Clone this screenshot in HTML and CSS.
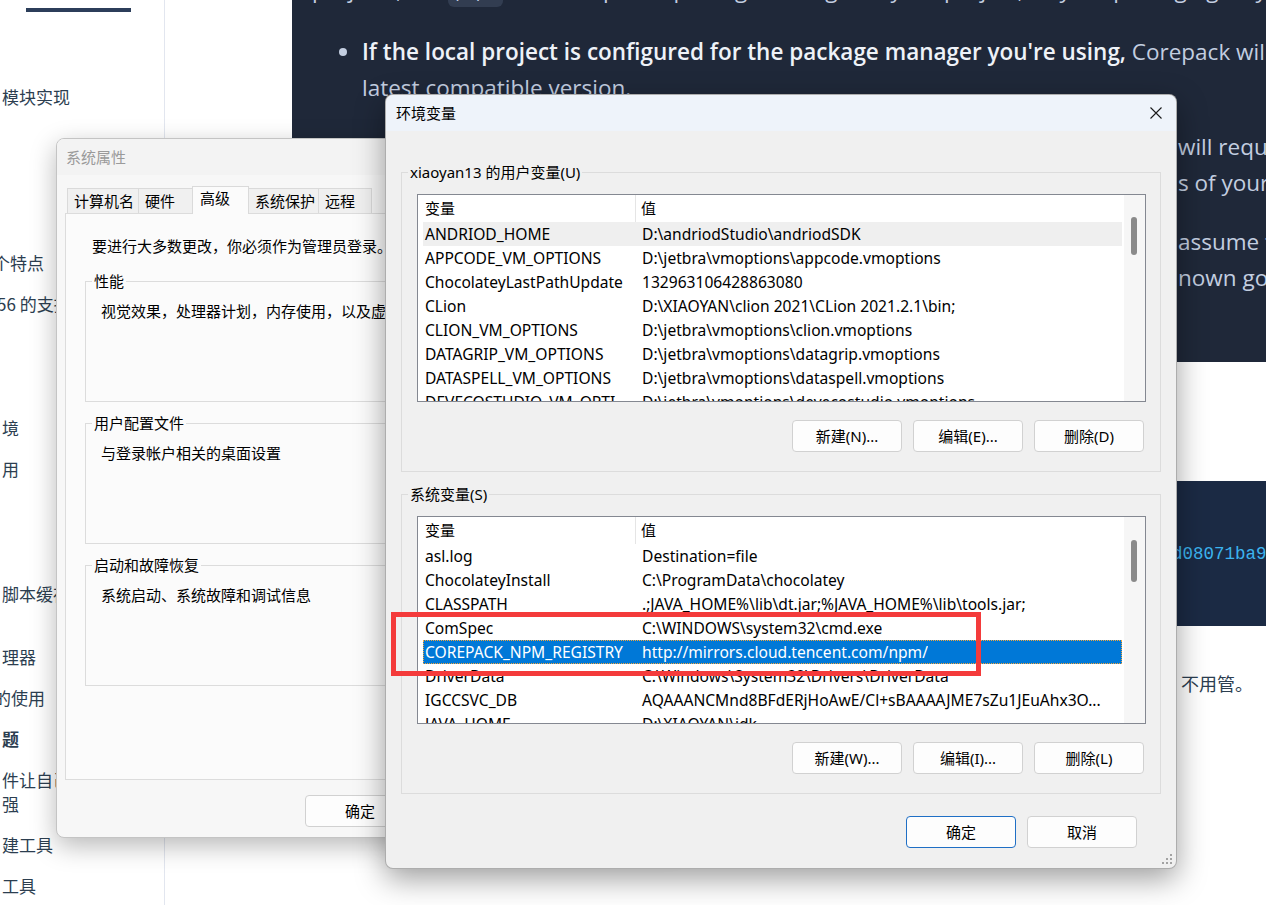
FILE: index.html
```html
<!DOCTYPE html>
<html lang="zh-CN">
<head>
<meta charset="utf-8">
<title>环境变量</title>
<link rel="stylesheet" href="styles.css">
</head>
<body>
<div class="page">
  <aside class="sidebar">
    <div class="brand-bar"></div>
    <ul class="nav">
      <li class="first">模块实现</li>
      <li class="mt142"><span class="cut7">个</span>特点</li>
      <li><span class="cut4">5</span>6 的支持</li>
      <li class="mt100">境</li>
      <li>用</li>
      <li class="mt101">脚本缓存</li>
      <li class="mt39">理器</li>
      <li><span class="cut6">的</span>使用</li>
      <li class="bold">题</li>
      <li>件让自己更<br>强</li>
      <li>建工具</li>
      <li>工具</li>
    </ul>
  </aside>
  <main class="main">
    <section class="doc-dark">
      <p class="lead">projects, the <code>pnpm</code> shim keeps the package manager in your project, so your packaging stays</p>
      <ul class="bullets">
        <li>
          <span class="ln"><strong>If the local project is configured for the package manager you're using,</strong> Corepack will silently download and cache the</span>
          <span class="ln">latest compatible version.</span>
        </li>
        <li>
          <span class="ln"><span class="under"></span>will request you to run the command again</span>
          <span class="ln"><span class="under"></span>s of your install artifacts.</span>
        </li>
        <li>
          <span class="ln"><span class="under"></span>assume that you know what you're doing</span>
          <span class="ln"><span class="under"></span>nown good release".</span>
        </li>
      </ul>
    </section>
    <section class="doc-code">
      <pre><span class="under-code"></span>d08071ba9a2e1c</pre>
    </section>
    <p class="tail">不用管。</p>
  </main>
</div>

<div class="win sysprops">
  <div class="sp-title">系统属性</div>
  <div class="tabs">
    <span class="tab w71">计算机名</span>
    <span class="tab w54">硬件</span>
    <span class="tab w56 active">高级</span>
    <span class="tab w70">系统保护</span>
    <span class="tab w53">远程</span>
  </div>
  <div class="sp-panel">
    <p class="sp-note">要进行大多数更改，你必须作为管理员登录。</p>
    <div class="sp-group"><span class="legend">性能</span><p>视觉效果，处理器计划，内存使用，以及虚</p></div>
    <div class="sp-group"><span class="legend">用户配置文件</span><p>与登录帐户相关的桌面设置</p></div>
    <div class="sp-group"><span class="legend">启动和故障恢复</span><p>系统启动、系统故障和调试信息</p></div>
  </div>
  <div class="sp-foot">
    <button class="btn">确定</button>
    <button class="btn">取消</button>
    <button class="btn">应用(A)</button>
  </div>
</div>

<div class="win envvars">
  <div class="ev-title">
    <span>环境变量</span>
    <svg class="close" width="12" height="12" viewBox="0 0 12 12"><path d="M0.5 0.5 L11.5 11.5 M11.5 0.5 L0.5 11.5" stroke="#1a1a1a" stroke-width="1.1" fill="none"/></svg>
  </div>
  <div class="ev-body">
    <div class="group">
      <span class="legend">xiaoyan13 的用户变量(U)</span>
      <div class="list">
        <div class="list-main">
          <div class="lh"><span class="h1">变量</span><span class="h2">值</span></div>
          <div class="rows">
            <div class="row hover"><span class="c1">ANDRIOD_HOME</span><span class="c2">D:\andriodStudio\andriodSDK</span></div>
            <div class="row"><span class="c1">APPCODE_VM_OPTIONS</span><span class="c2">D:\jetbra\vmoptions\appcode.vmoptions</span></div>
            <div class="row"><span class="c1">ChocolateyLastPathUpdate</span><span class="c2">132963106428863080</span></div>
            <div class="row"><span class="c1">CLion</span><span class="c2">D:\XIAOYAN\clion 2021\CLion 2021.2.1\bin;</span></div>
            <div class="row"><span class="c1">CLION_VM_OPTIONS</span><span class="c2">D:\jetbra\vmoptions\clion.vmoptions</span></div>
            <div class="row"><span class="c1">DATAGRIP_VM_OPTIONS</span><span class="c2">D:\jetbra\vmoptions\datagrip.vmoptions</span></div>
            <div class="row"><span class="c1">DATASPELL_VM_OPTIONS</span><span class="c2">D:\jetbra\vmoptions\dataspell.vmoptions</span></div>
            <div class="row"><span class="c1">DEVECOSTUDIO_VM_OPTI...</span><span class="c2">D:\jetbra\vmoptions\devecostudio.vmoptions</span></div>
          </div>
        </div>
        <div class="sb"><div class="thumb th-u"></div></div>
      </div>
      <div class="btns">
        <button class="btn">新建(N)...</button>
        <button class="btn">编辑(E)...</button>
        <button class="btn">删除(D)</button>
      </div>
    </div>

    <div class="group">
      <span class="legend">系统变量(S)</span>
      <div class="list">
        <div class="list-main">
          <div class="lh"><span class="h1">变量</span><span class="h2">值</span></div>
          <div class="rows">
            <div class="row"><span class="c1">asl.log</span><span class="c2">Destination=file</span></div>
            <div class="row"><span class="c1">ChocolateyInstall</span><span class="c2">C:\ProgramData\chocolatey</span></div>
            <div class="row"><span class="c1">CLASSPATH</span><span class="c2">.;JAVA_HOME%\lib\dt.jar;%JAVA_HOME%\lib\tools.jar;</span></div>
            <div class="row"><span class="c1">ComSpec</span><span class="c2">C:\WINDOWS\system32\cmd.exe</span></div>
            <div class="row sel"><span class="c1">COREPACK_NPM_REGISTRY</span><span class="c2">http://mirrors.cloud.tencent.com/npm/</span></div>
            <div class="row"><span class="c1">DriverData</span><span class="c2">C:\Windows\System32\Drivers\DriverData</span></div>
            <div class="row"><span class="c1">IGCCSVC_DB</span><span class="c2">AQAAANCMnd8BFdERjHoAwE/Cl+sBAAAAJME7sZu1JEuAhx3O...</span></div>
            <div class="row"><span class="c1">JAVA_HOME</span><span class="c2">D:\XIAOYAN\jdk</span></div>
          </div>
        </div>
        <div class="sb"><div class="thumb th-s"></div></div>
      </div>
      <div class="btns">
        <button class="btn">新建(W)...</button>
        <button class="btn">编辑(I)...</button>
        <button class="btn">删除(L)</button>
      </div>
    </div>
  </div>
  <div class="ev-foot">
    <button class="btn primary">确定</button>
    <button class="btn">取消</button>
  </div>
  <svg class="grip" width="10" height="11" viewBox="0 0 10 11">
    <rect x="8" y="0" width="2" height="2" fill="#a3a3a3"/>
    <rect x="8" y="4" width="2" height="2" fill="#a3a3a3"/>
    <rect x="4" y="4" width="2" height="2" fill="#a3a3a3"/>
    <rect x="8" y="8" width="2" height="2" fill="#a3a3a3"/>
    <rect x="4" y="8" width="2" height="2" fill="#a3a3a3"/>
    <rect x="0" y="8" width="2" height="2" fill="#a3a3a3"/>
  </svg>
</div>

<div class="annot"></div>
</body>
</html>
```

FILE: styles.css
```css
html, body {
  margin: 0;
  padding: 0;
}
body {
  width: 1266px;
  height: 905px;
  overflow: hidden;
  position: relative;
  background: #ffffff;
  font-family: "Noto Sans", "Noto Sans CJK SC", sans-serif;
}

/* ---------- background web page ---------- */
.page {
  display: flex;
  height: 905px;
}
.sidebar {
  width: 164px;
  flex: none;
  border-right: 1px solid #e2e6ef;
  font-family: "Noto Sans CJK SC", sans-serif;
  font-size: 17px;
  color: #2c3e50;
}
.brand-bar {
  margin: 8px 0 0 26px;
  width: 105px;
  height: 4px;
  background: #2c3e5a;
}
.nav {
  list-style: none;
  margin: 73px 0 0;
  padding: 0;
}
.nav li {
  margin-top: 17px;
  padding-left: 2px;
  line-height: 24px;
  white-space: nowrap;
}
.nav li.first { margin-top: 0; }
.nav li.mt142 { margin-top: 142px; }
.nav li.mt100 { margin-top: 100px; }
.nav li.mt101 { margin-top: 101px; }
.nav li.mt39 { margin-top: 39px; }
.nav li.bold { font-weight: 700; }
.cut7 { margin-left: -9px; }
.cut6 { margin-left: -8px; }
.cut4 { margin-left: -5px; }

.main {
  flex: 1;
  min-width: 0;
  overflow: hidden;
  padding-left: 127px;
}
.doc-dark {
  height: 362px;
  background: #1f2839;
  padding-left: 20px;
  overflow: hidden;
  color: #c3cee0;
  font-family: "Open Sans", sans-serif;
  font-size: 22.5px;
  line-height: 36px;
}
.lead {
  margin: -28px 0 22px;
  white-space: nowrap;
}
.lead code {
  font-family: "Liberation Mono", monospace;
  font-size: 17px;
  background: #323d51;
  border-radius: 6px;
  padding: 4px 7px;
}
.bullets {
  margin: 0;
  padding-left: 50px;
}
.bullets li {
  margin-top: 23px;
}
.bullets li:first-child { margin-top: 0; }
.bullets li::marker { color: #c3cee0; }
.ln {
  display: block;
  white-space: nowrap;
}
.ln strong {
  color: #eef2f8;
  font-weight: 600;
}
.under {
  display: inline-block;
  width: 816px;
  height: 36px;
  vertical-align: top;
}
.doc-code {
  margin-top: 119px;
  height: 145px;
  background: #1b2a44;
  display: flex;
  align-items: center;
}
.doc-code pre {
  margin: 0;
  font-family: "Liberation Mono", monospace;
  font-size: 17.5px;
  line-height: 24px;
  color: #3cb4ef;
}
.under-code {
  display: inline-block;
  width: 880px;
  height: 24px;
  vertical-align: top;
}
.tail {
  margin: 42px 0 0;
  padding-right: 13px;
  text-align: right;
  white-space: nowrap;
  font-family: "Noto Sans CJK SC", sans-serif;
  font-size: 18px;
  line-height: 30px;
  color: #2c3e50;
}

/* ---------- windows ---------- */
.win {
  position: absolute;
  box-sizing: border-box;
  font-family: "Noto Sans", "Noto Sans CJK SC", sans-serif;
  font-size: 15px;
  line-height: 20px;
  color: #000;
}
.btn {
  width: 110px;
  height: 32px;
  box-sizing: border-box;
  padding: 0;
  border: 1px solid #d1d1d1;
  border-radius: 4px;
  background: #fdfdfd;
  font: inherit;
  line-height: 28px;
  color: #000;
}
.btn.primary {
  border-color: #1f6fc5;
}
.legend {
  position: absolute;
  top: -11px;
  left: 6px;
  padding: 0 2px;
  line-height: 20px;
  white-space: nowrap;
}

/* system properties */
.sysprops {
  left: 56px;
  top: 138px;
  width: 624px;
  height: 700px;
  border: 1px solid #c4c4c4;
  border-radius: 8px;
  background: #f7f7f7;
  box-shadow: 0 8px 26px rgba(0, 0, 0, 0.28);
  overflow: hidden;
  display: flex;
  flex-direction: column;
}
.sp-title {
  height: 36px;
  padding-left: 9px;
  line-height: 37px;
  color: #9a9a9a;
  background: #f3f3f3;
}
.tabs {
  display: flex;
  align-items: flex-end;
  height: 27px;
  margin-top: 11px;
  padding-left: 10px;
}
.tab {
  box-sizing: border-box;
  height: 25px;
  padding-left: 6px;
  border: 1px solid #dadada;
  border-bottom: none;
  margin-right: -1px;
  background: #f0f0f0;
  line-height: 24px;
  white-space: nowrap;
}
.tab.active {
  height: 28px;
  margin-bottom: -1px;
  padding-left: 7px;
  background: #fbfbfb;
  line-height: 22px;
  position: relative;
  z-index: 1;
}
.w71 { width: 72px; }
.w54 { width: 55px; }
.w56 { width: 57px; }
.w70 { width: 71px; }
.w53 { width: 54px; }
.sp-panel {
  height: 567px;
  box-sizing: border-box;
  margin: 0 8px;
  padding: 22px 0 0 26px;
  border: 1px solid #dcdcdc;
  background: #fbfbfb;
}
.sp-note {
  margin: 0 0 25px;
  white-space: nowrap;
}
.sp-group {
  position: relative;
  box-sizing: border-box;
  height: 121px;
  margin: 0 0 21px -7px;
  padding: 19px 0 0 15px;
  border: 1px solid #dcdcdc;
}
.sp-group .legend { background: #fbfbfb; }
.sp-group p {
  margin: 0;
  white-space: nowrap;
}
.sp-foot {
  display: flex;
  justify-content: flex-end;
  gap: 12px;
  padding: 15px 20px 0 0;
}

/* environment variables */
.envvars {
  left: 385px;
  top: 94px;
  width: 792px;
  height: 775px;
  border: 1px solid rgba(0, 0, 0, 0.28);
  border-radius: 8px;
  background: #f0f0f0;
  box-shadow: 0 10px 30px rgba(0, 0, 0, 0.38);
  overflow: hidden;
}
.ev-title {
  height: 36px;
  display: flex;
  align-items: center;
  justify-content: space-between;
  padding: 0 14px 0 10px;
  background: #eef3fa;
}
.ev-title span { line-height: 36px; }
.close { display: block; }
.ev-body {
  padding: 41px 15px 0 15px;
}
.group {
  position: relative;
  box-sizing: border-box;
  height: 300px;
  margin-bottom: 22px;
  padding: 21px 14px 0 15px;
  border: 1px solid #dcdcdc;
}
.group .legend { background: #f0f0f0; }
.list {
  box-sizing: border-box;
  height: 208px;
  display: flex;
  border: 1px solid #848891;
  background: #ffffff;
  overflow: hidden;
}
.list-main {
  flex: 1;
  min-width: 0;
}
.lh {
  display: flex;
  height: 27px;
  line-height: 27px;
}
.h1 {
  width: 218px;
  flex: none;
  box-sizing: border-box;
  padding-left: 7px;
  border-right: 1px solid #e5e5e5;
}
.h2 { padding-left: 5px; }
.rows {
  padding: 0 2px 0 5px;
  font-size: 15.6px;
}
.row {
  display: flex;
  height: 24px;
  line-height: 24px;
  white-space: nowrap;
}
.row.hover { background: #efefef; }
.row.sel {
  background: #0078d7;
  color: #ffffff;
  outline: 1px dotted #f6a63a;
  outline-offset: -1px;
}
.c1 {
  width: 217px;
  flex: none;
  box-sizing: border-box;
  padding-left: 2px;
  overflow: hidden;
}
.c2 {
  padding-left: 2px;
  overflow: hidden;
}
.sb {
  width: 21px;
  flex: none;
  background: #f6f6f6;
}
.thumb {
  width: 6px;
  margin-left: 7px;
  border-radius: 3px;
  background: #8a8a8a;
}
.th-u { margin-top: 22px; height: 38px; }
.th-s { margin-top: 23px; height: 42px; }
.btns {
  display: flex;
  justify-content: flex-end;
  gap: 11px;
  margin: 18px 2px 0 0;
}
.ev-foot {
  display: flex;
  justify-content: flex-end;
  gap: 11px;
  padding-right: 39px;
}
.grip {
  position: absolute;
  right: 4px;
  bottom: 3px;
}

/* annotation */
.annot {
  position: absolute;
  left: 391px;
  top: 612px;
  width: 590px;
  height: 64px;
  box-sizing: border-box;
  border: 5px solid #f43b3b;
}
```
